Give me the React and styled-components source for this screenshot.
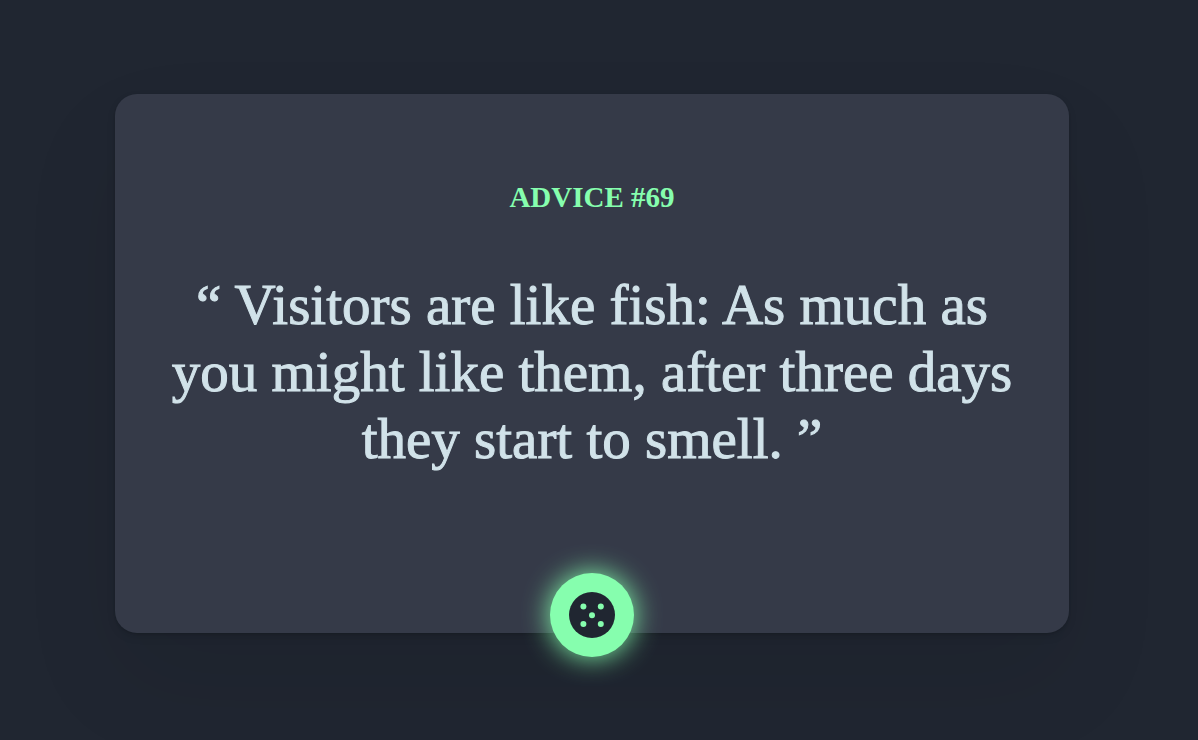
import React from "react";
import styled, { createGlobalStyle } from "styled-components";

const GlobalStyle = createGlobalStyle`
  *, *::before, *::after { box-sizing: border-box; }
  body {
    margin: 0;
    background: #202631;
    font-family: "Liberation Serif", "Times New Roman", serif;
  }
`;

const Page = styled.main`
  min-height: 100vh;
  padding: 94px 129px 82px 115px;
`;

const Card = styled.article`
  display: flex;
  flex-direction: column;
  align-items: center;
  padding: 86px 48px 0;
  border-radius: 22px;
  background: #353a48;
  text-align: center;
  box-shadow:
    0 1px 2px rgba(0, 0, 0, 0.12),
    0 4px 8px rgba(0, 0, 0, 0.1),
    0 48px 100px rgba(0, 0, 0, 0.08);
`;

const Title = styled.h1`
  margin: 0 0 57px;
  color: #86feae;
  font-size: 29px;
  line-height: 34px;
  font-weight: 700;
  text-transform: uppercase;
`;

const Quote = styled.p`
  margin: 0 0 101px;
  color: #d1e2e9;
  font-size: 57px;
  line-height: 67px;
  -webkit-text-stroke: 1px currentColor;
`;

const DiceButton = styled.button`
  display: grid;
  place-items: center;
  width: 84px;
  height: 84px;
  margin-bottom: -24px;
  padding: 0;
  border: 0;
  border-radius: 50%;
  background: #86feae;
  box-shadow: 0 0 28px #86feae;
  cursor: pointer;
`;

const DiceIcon = () => (
  <svg width="46" height="46" viewBox="0 0 46 46" aria-hidden="true">
    <circle cx="23" cy="23" r="23" fill="#202631" />
    <g fill="#86feae">
      <circle cx="14.4" cy="14.6" r="3" />
      <circle cx="31.8" cy="14.6" r="3" />
      <circle cx="23" cy="23.2" r="3" />
      <circle cx="14.4" cy="31.9" r="3" />
      <circle cx="31.8" cy="31.9" r="3" />
    </g>
  </svg>
);

export default function App() {
  return (
    <>
      <GlobalStyle />
      <Page>
        <Card>
          <Title>Advice #69</Title>
          <Quote>
            “ Visitors are like fish: As much as you might like them, after
            three days they start to smell. ”
          </Quote>
          <DiceButton type="button" aria-label="New advice">
            <DiceIcon />
          </DiceButton>
        </Card>
      </Page>
    </>
  );
}
